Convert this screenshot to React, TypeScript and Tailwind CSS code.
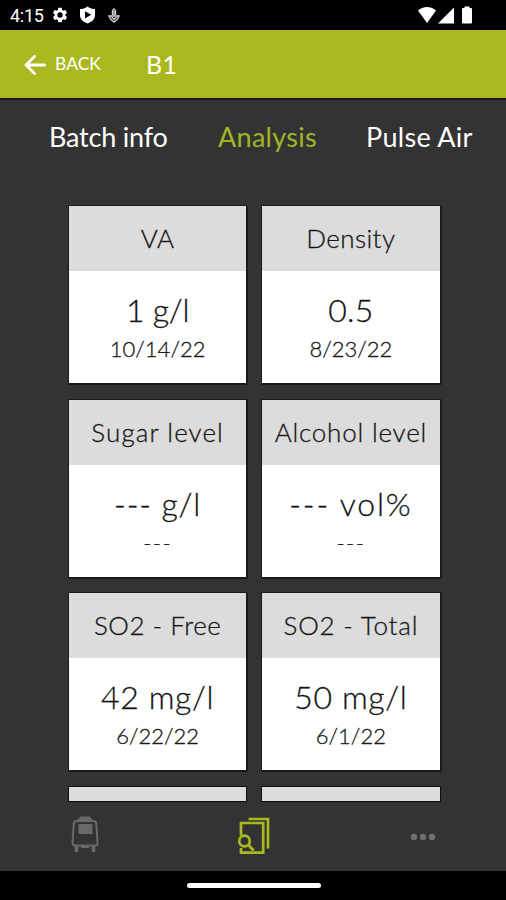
import { clsx } from 'clsx';

interface Reading {
  title: string;
  value: string;
  date: string;
  titleClass?: string;
  valueClass?: string;
  dateClass?: string;
}

const readings: Reading[] = [
  { title: 'VA', value: '1 g/l', date: '10/14/22', titleClass: 'tracking-[0.4px]', valueClass: 'tracking-[-0.3px]' },
  { title: 'Density', value: '0.5', date: '8/23/22', titleClass: 'tracking-[0.4px]', valueClass: 'tracking-[0.3px]' },
  { title: 'Sugar level', value: '--- g/l', date: '---', titleClass: 'tracking-[1.1px]', valueClass: 'tracking-[0.8px]', dateClass: 'tracking-[1.5px]' },
  { title: 'Alcohol level', value: '--- vol%', date: '---', titleClass: 'tracking-[0.8px]', valueClass: 'tracking-[1.8px]', dateClass: 'tracking-[1.5px]' },
  { title: 'SO2 - Free', value: '42 mg/l', date: '6/22/22', titleClass: 'tracking-[0.5px]', valueClass: 'tracking-[0.6px]' },
  { title: 'SO2 - Total', value: '50 mg/l', date: '6/1/22', titleClass: 'tracking-[0.8px]', valueClass: 'tracking-[0.6px]' },
];

function StatusBar() {
  return (
    <div className="flex h-[30px] shrink-0 items-center bg-black pl-[10px] pr-[32px] text-white">
      <span className="w-[35px] whitespace-nowrap pt-px font-[Roboto] text-[18px] leading-none tracking-[-0.3px]">4:15</span>
      <svg className="ml-[6px] size-[18px]" viewBox="0 0 24 24" fill="currentColor">
        <path d="M19.14 12.94c.04-.3.06-.61.06-.94s-.02-.64-.07-.94l2.03-1.58a.49.49 0 0 0 .12-.61l-1.92-3.32a.49.49 0 0 0-.59-.22l-2.39.96c-.5-.38-1.03-.7-1.62-.94l-.36-2.54a.48.48 0 0 0-.48-.41h-3.84a.48.48 0 0 0-.47.41l-.36 2.54c-.59.24-1.13.57-1.62.94l-2.39-.96a.48.48 0 0 0-.59.22L2.74 8.87a.48.48 0 0 0 .12.61l2.03 1.58c-.05.3-.09.63-.09.94s.02.64.07.94l-2.03 1.58a.49.49 0 0 0-.12.61l1.92 3.32c.12.22.37.29.59.22l2.39-.96c.5.38 1.03.7 1.62.94l.36 2.54c.05.24.24.41.48.41h3.84c.24 0 .44-.17.47-.41l.36-2.54c.59-.24 1.13-.56 1.62-.94l2.39.96c.22.08.47 0 .59-.22l1.92-3.32a.48.48 0 0 0-.12-.61zM12 15.6a3.6 3.6 0 1 1 0-7.2 3.6 3.6 0 0 1 0 7.2z" />
      </svg>
      <svg className="ml-[10px] h-[18px] w-[17px]" viewBox="0 0 17 18">
        <path d="M8.5.5C6 2.5 3.5 3 1 3v6c0 4 3 7 7.500 8.500C13 16 16 13 16 9V3c-2.500 0-5-.5-7.500-2.500z" fill="currentColor" />
        <path d="M6 5.200v7.200L12.200 8.800z" fill="#000" />
      </svg>
      <svg className="ml-[12px] h-[15px] w-[12px]" viewBox="0 0 12 15" fill="none" stroke="#d0d0d0" strokeWidth="1.400">
        <path d="M4.500 7V2.500L6 1l1.500 1.500V7" />
        <path d="M6 3v5" />
        <path d="M1 8h10L9.500 11 6 14 2.500 11z" />
        <path d="M3.500 9 6 11.200 8.500 9" />
      </svg>
      <svg className="ml-auto h-[18px] w-[56px]" viewBox="0 0 56 18" fill="currentColor">
        <path d="M0 4.600C2.500 2.200 5.500 1 9 1s6.500 1.200 9 3.600L9 17z" />
        <path d="M36 1.500V17.500H20z" />
        <path d="M46.500 2V.5h5V2h1.500q1 0 1 1v13.500q0 1-1 1h-8q-1 0-1-1V3q0-1 1-1z" />
      </svg>
    </div>
  );
}

function Header() {
  return (
    <header className="flex h-[70px] shrink-0 items-center border-b-2 border-b-[#171812] bg-[#abb921] pl-[24px] pt-px text-white">
      <svg className="h-[20px] w-[22px]" viewBox="0 0 22 20" fill="none" stroke="currentColor" strokeWidth="2.800" strokeLinecap="round" strokeLinejoin="round">
        <path d="M10.500 1.500 2 10l8.500 8.500M2 10h18.500" />
      </svg>
      <span className="ml-[9px] w-[47px] whitespace-nowrap text-[17.5px]">BACK</span>
      <h1 className="ml-[44px] text-[25px] tracking-[0.4px]">B1</h1>
    </header>
  );
}

function Tabs() {
  return (
    <nav className="flex h-[105px] shrink-0 whitespace-nowrap pl-[49px] pt-[20px] text-[27px] leading-[34px] text-white">
      <span className="w-[169px] tracking-[-0.2px]">Batch info</span>
      <span className="w-[148px] tracking-[0.3px] text-[#a3b526]">Analysis</span>
      <span className="tracking-[0.3px]">Pulse Air</span>
    </nav>
  );
}

function ReadingCard({ title, value, date, titleClass, valueClass, dateClass }: Reading) {
  return (
    <div className="h-[177.25px] whitespace-nowrap bg-white text-center font-light text-[#111] shadow-[0_0_0_1px_#1a1a1a,0.5px_0.5px_0_1px_#000] [-webkit-text-stroke:0.3px_#222]">
      <div className={clsx('h-[65px] bg-[#dcdcdc] text-[26px] leading-[65px]', titleClass)}>{title}</div>
      <div className={clsx('mt-[19px] text-[32px] leading-[40px]', valueClass)}>{value}</div>
      <div className={clsx('mt-[4px] text-[22px] leading-[30px]', dateClass)}>{date}</div>
    </div>
  );
}

// Top edge of the next row, cut off above the bottom navigation
function PeekCard() {
  return <div className="h-[14.25px] bg-[#dcdcdc] shadow-[0_0_0_1px_#0d0d0d]" />;
}

function BottomNav() {
  return (
    <nav className="flex h-[69px] shrink-0 border-t border-[#303030] bg-[#333]">
      <div className="flex w-[169px] justify-center pt-[13px]">
        <svg className="h-[38px] w-[28px] text-[#696969]" viewBox="0 0 28 38" fill="none" stroke="currentColor" strokeWidth="2">
          <path d="M5.500 5h17q2.500 0 2.800 2.500L26.500 27q0 2.500-2.500 2.500H4Q1.500 29.500 1.500 27L2.700 7.500Q3 5 5.500 5z" />
          <path d="M7.500 4 10 1.500h8L20.500 4z" fill="currentColor" />
          <path d="M8.500 9h12v8h-12z" fill="currentColor" />
          <path d="M5.500 29v7M22.500 29v7" strokeWidth="3.500" />
          <path d="M10 31h8" />
        </svg>
      </div>
      <div className="flex w-[169px] justify-center pt-[14px]">
        <svg className="h-[39px] w-[34px] text-[#abb921]" viewBox="0 0 34 39" fill="none" stroke="currentColor" strokeWidth="2.700">
          <path d="M11.500 2H31v29.500" />
          <path d="M4 18.500V6h22.200v29.700H4V31" />
          <circle cx="7.500" cy="24" r="5.300" />
          <path d="m11.500 28 5 5.500" strokeWidth="3" />
        </svg>
      </div>
      <div className="flex flex-1 justify-center pl-px pt-[30px]">
        <svg className="h-[8px] w-[26px] text-[#707070]" viewBox="0 0 26 8" fill="currentColor">
          <circle cx="4" cy="4" r="3.200" />
          <circle cx="13" cy="4" r="3.200" />
          <circle cx="22" cy="4" r="3.200" />
        </svg>
      </div>
    </nav>
  );
}

export default function App() {
  return (
    <div className="flex h-[900px] w-[506px] flex-col overflow-hidden bg-[#333] font-['Lato',sans-serif]">
      <StatusBar />
      <Header />
      <Tabs />
      <main className="min-h-0 flex-1 overflow-hidden px-[69px] pt-[1px]">
        <div className="grid w-[370.5px] grid-cols-2 gap-x-4 gap-y-[16.25px]">
          {readings.map((reading) => (
            <ReadingCard key={reading.title} {...reading} />
          ))}
          <PeekCard />
          <PeekCard />
        </div>
      </main>
      <BottomNav />
      <div className="flex h-[29px] shrink-0 items-center justify-center bg-black pl-px">
        <div className="h-[5px] w-[134px] rounded-full bg-white" />
      </div>
    </div>
  );
}
